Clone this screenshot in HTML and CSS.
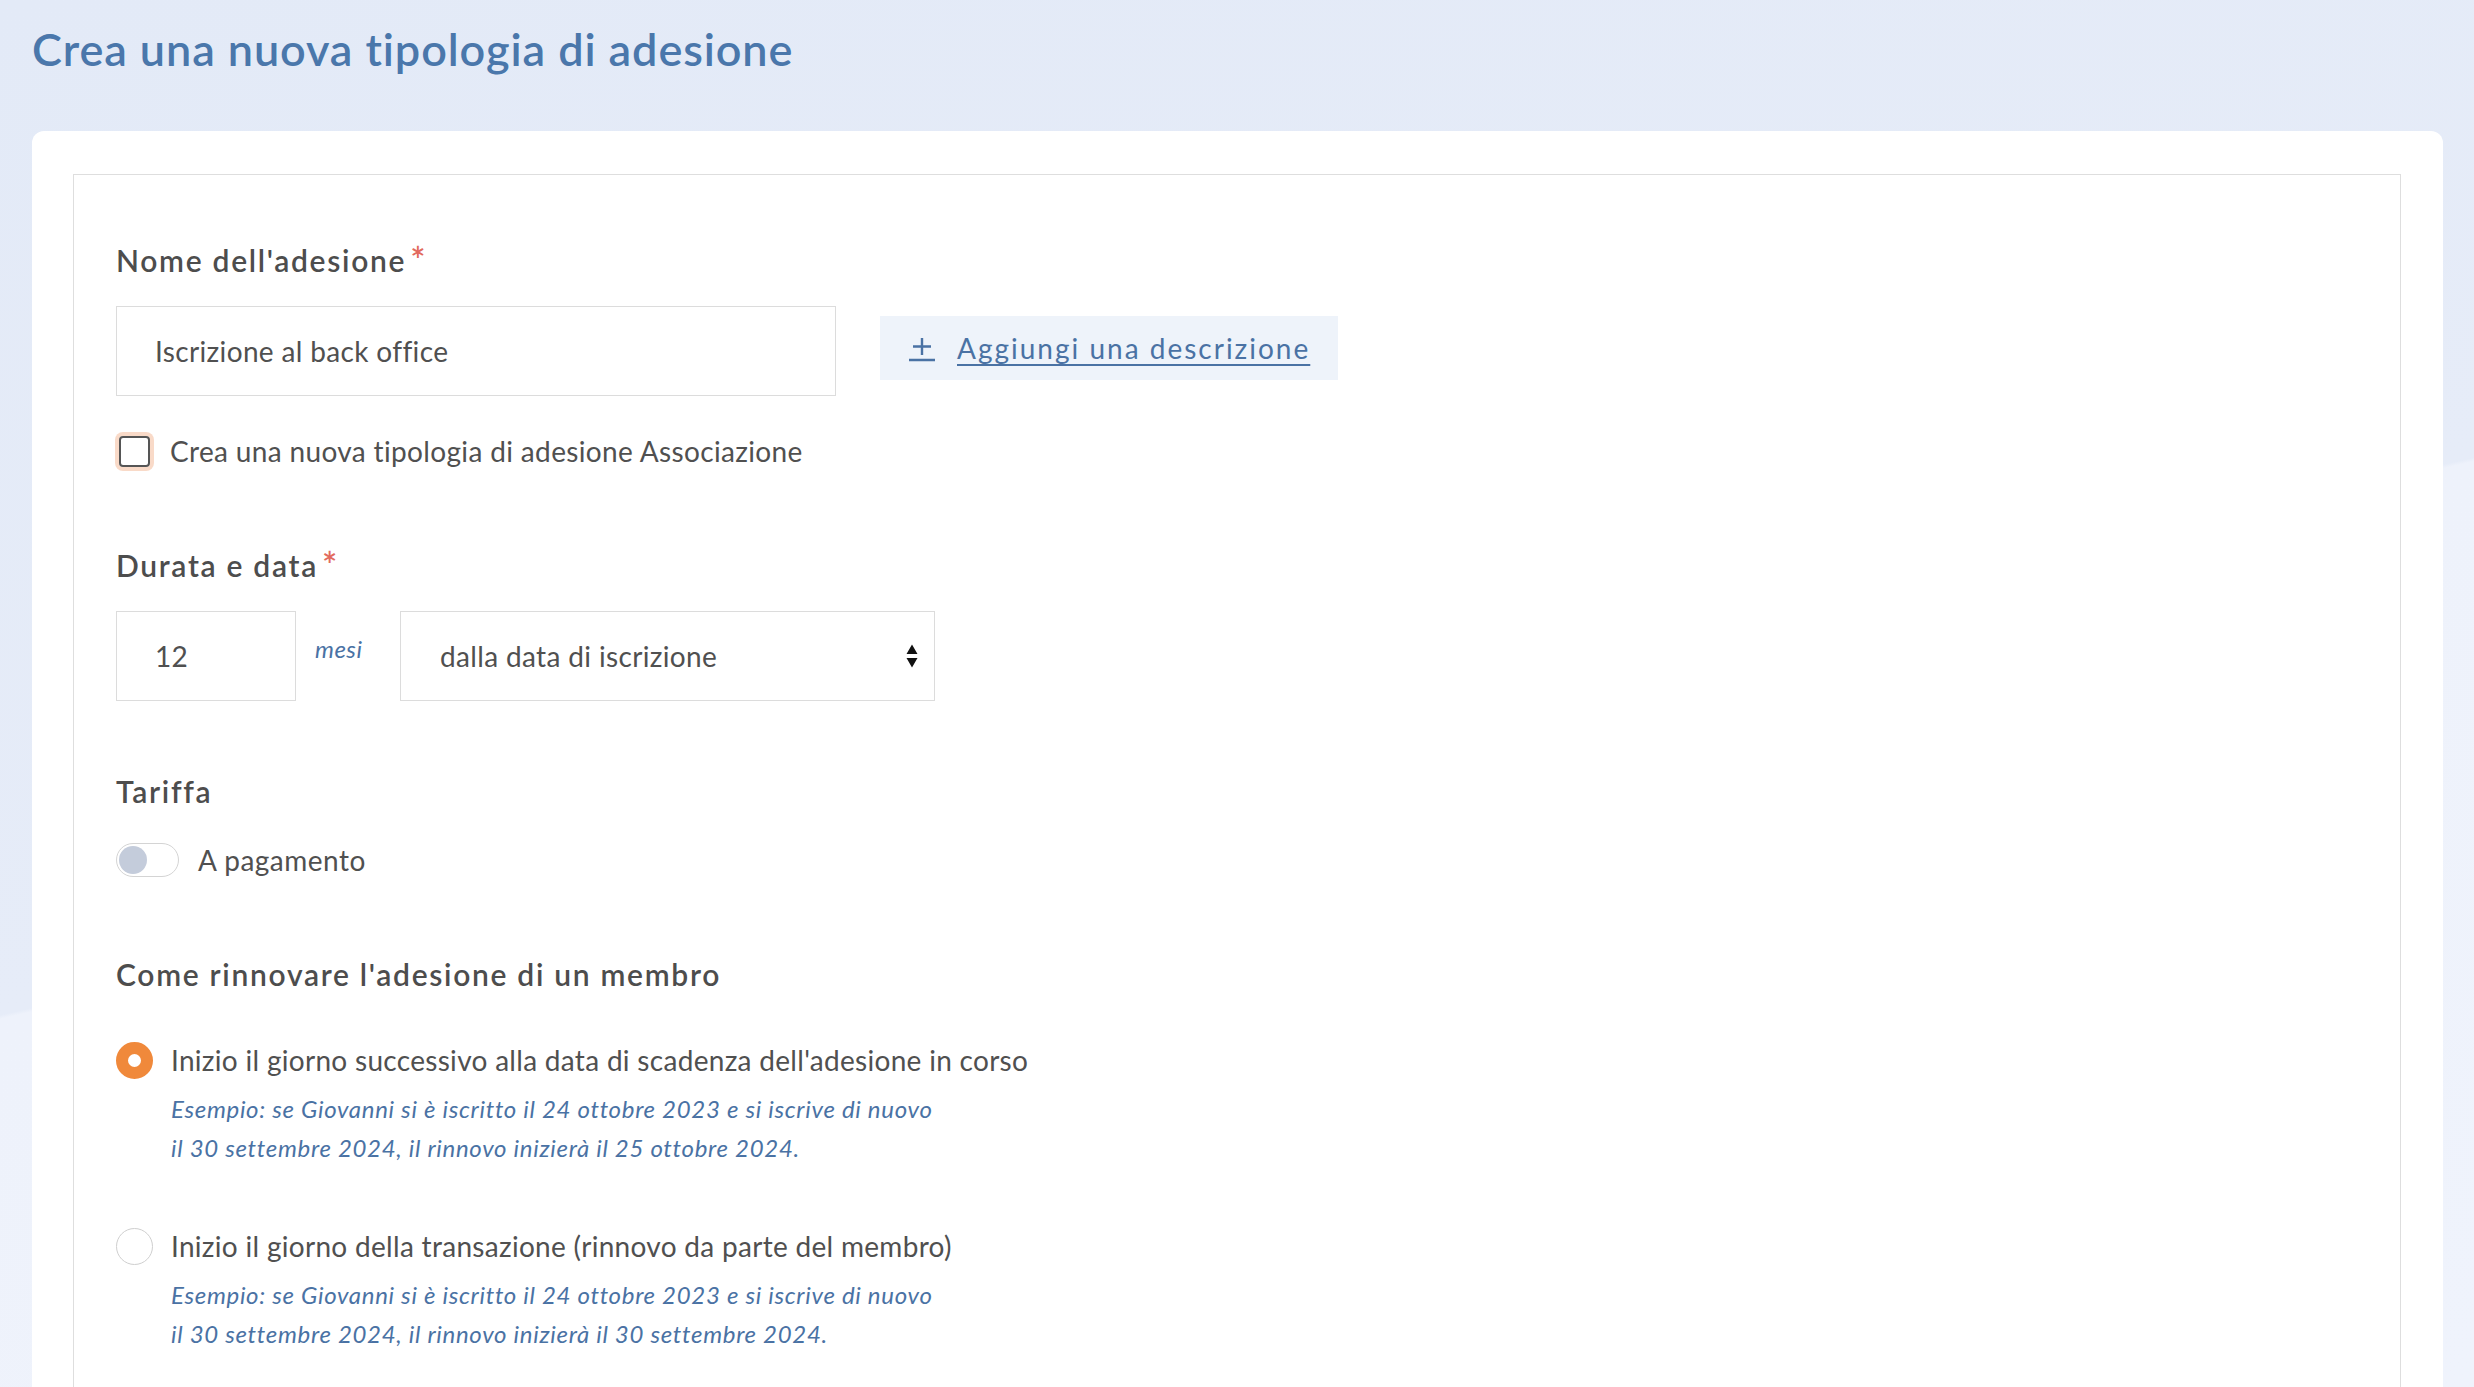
FILE: index.html
```html
<!DOCTYPE html>
<html lang="it">
<head>
<meta charset="utf-8">
<title>Crea una nuova tipologia di adesione</title>
<link rel="stylesheet" href="styles.css">
</head>
<body>
<div class="page">
  <h1 class="title">Crea una nuova tipologia di adesione</h1>
  <div class="card">
    <div class="panel">
      <section class="field field-name">
        <div class="label">Nome dell'adesione<span class="req">*</span></div>
        <div class="row">
          <input class="input input-name" type="text" value="Iscrizione al back office">
          <button class="add-desc" type="button">
            <svg class="add-icon" viewBox="0 0 28 26" width="28" height="26" aria-hidden="true">
              <path d="M14 2v17M5 10.5h18M1 24h26" fill="none" stroke="#4a72a4" stroke-width="2.4"/>
            </svg>
            <span class="add-text">Aggiungi una descrizione</span>
          </button>
        </div>
        <label class="check">
          <span class="check-box"></span>
          <span>Crea una nuova tipologia di adesione Associazione</span>
        </label>
      </section>

      <section class="field field-duration">
        <div class="label">Durata e data<span class="req">*</span></div>
        <div class="row row-duration">
          <input class="input input-months" type="text" value="12">
          <span class="unit">mesi</span>
          <div class="select">
            <span>dalla data di iscrizione</span>
            <svg class="select-arrows" viewBox="0 0 12 26" width="12" height="26" aria-hidden="true">
              <path d="M6 1.5L11.5 11H0.5Z M6 24.5L11.5 15H0.5Z" fill="#111"/>
            </svg>
          </div>
        </div>
      </section>

      <section class="field field-fee">
        <div class="label">Tariffa</div>
        <div class="toggle-row">
          <span class="toggle"><span class="knob"></span></span>
          <span>A pagamento</span>
        </div>
      </section>

      <section class="field field-renew">
        <div class="label">Come rinnovare l'adesione di un membro</div>
        <div class="option">
          <div class="radio-row">
            <span class="radio radio-on"></span>
            <span>Inizio il giorno successivo alla data di scadenza dell'adesione in corso</span>
          </div>
          <p class="example">Esempio: se Giovanni si è iscritto il 24 ottobre 2023 e si iscrive di nuovo<br>il 30 settembre 2024, il rinnovo inizierà il 25 ottobre 2024.</p>
        </div>
        <div class="option option-2">
          <div class="radio-row">
            <span class="radio"></span>
            <span>Inizio il giorno della transazione (rinnovo da parte del membro)</span>
          </div>
          <p class="example">Esempio: se Giovanni si è iscritto il 24 ottobre 2023 e si iscrive di nuovo<br>il 30 settembre 2024, il rinnovo inizierà il 30 settembre 2024.</p>
        </div>
      </section>
    </div>
  </div>
</div>
</body>
</html>
```
FILE: styles.css
```css
html {
  background-color: #eef2fb;
  background-image: linear-gradient(167.3deg, #e3eaf7 0%, #e6ecf8 52.2%, #eef2fb 52.4%, #eff3fc 100%);
  background-repeat: no-repeat;
  background-size: 100% 1387px;
}

body {
  margin: 0;
  font-family: "Lato", "Open Sans", sans-serif;
  color: #505050;
}

.page {
  padding: 0 31px 0 32px;
}

.title {
  margin: 0 0 55px;
  padding-top: 22px;
  font-size: 45px;
  line-height: 54px;
  font-weight: 600;
  letter-spacing: 0.9px;
  color: #4a77ab;
}

.card {
  background: #fff;
  border-radius: 12px 12px 0 0;
  padding: 43px 42px 0 41px;
}

.panel {
  border: 1px solid #dedede;
  border-bottom: none;
  padding: 65px 42px 200px;
}

.label {
  font-size: 30px;
  line-height: 40px;
  font-weight: 600;
  color: #4d4d4d;
  letter-spacing: 1.7px;
}

.req {
  color: #e26a5d;
  margin-left: 4px;
  font-size: 36px;
  line-height: 0;
  vertical-align: -2px;
}

.row {
  display: flex;
  align-items: center;
  gap: 44px;
  margin-top: 26px;
}

.input {
  box-sizing: border-box;
  height: 90px;
  border: 1px solid #dcdcdc;
  border-radius: 0;
  padding: 0 38px;
  font-family: inherit;
  font-size: 28px;
  letter-spacing: 0.35px;
  color: #505050;
  background: #fff;
  outline: none;
}

.input-name {
  width: 720px;
}

.add-desc {
  display: flex;
  align-items: center;
  gap: 21px;
  height: 64px;
  width: 458px;
  padding: 0 0 0 28px;
  margin-top: -6px;
  border: none;
  background: #eef3fa;
  font-family: inherit;
  font-size: 28px;
  color: #4a72a4;
  cursor: pointer;
}

.add-icon {
  flex: none;
  margin-top: 2px;
}

.add-text {
  text-decoration: underline;
  text-underline-offset: 5px;
  text-decoration-thickness: 2px;
  letter-spacing: 2px;
}

.check {
  display: flex;
  align-items: center;
  gap: 20px;
  margin-top: 35px;
  height: 40px;
  font-size: 28px;
  letter-spacing: 0.35px;
  padding-left: 3px;
}

.check-box {
  box-sizing: border-box;
  width: 31px;
  height: 31px;
  border: 2px solid #555;
  border-radius: 4px;
  box-shadow: 0 0 0 4px #f9dac8;
  flex: none;
}

.field-duration {
  margin-top: 74px;
}

.row-duration {
  align-items: flex-start;
  gap: 0;
}

.input-months {
  width: 180px;
}

.unit {
  width: 104px;
  box-sizing: border-box;
  padding: 23px 0 0 19px;
  font-size: 24px;
  letter-spacing: 0.5px;
  font-style: italic;
  color: #4a72a4;
}

.select {
  box-sizing: border-box;
  width: 535px;
  height: 90px;
  border: 1px solid #dcdcdc;
  padding: 0 16px 0 39px;
  display: flex;
  align-items: center;
  justify-content: space-between;
  font-size: 28px;
  letter-spacing: 0.35px;
}

.field-fee {
  margin-top: 70px;
}

.toggle-row {
  display: flex;
  align-items: center;
  gap: 19px;
  margin-top: 29px;
  height: 40px;
  font-size: 28px;
  letter-spacing: 0.5px;
}

.toggle {
  box-sizing: border-box;
  width: 63px;
  height: 34px;
  border: 1px solid #d4d4d4;
  border-radius: 17px;
  padding: 2px;
  display: flex;
  align-items: center;
}

.knob {
  width: 28px;
  height: 28px;
  border-radius: 50%;
  background: #c4ccdb;
}

.field-renew {
  margin-top: 74px;
}

.option {
  margin-top: 46px;
}

.option-2 {
  margin-top: 59px;
}

.radio-row {
  display: flex;
  align-items: center;
  gap: 18px;
  height: 40px;
  font-size: 28px;
  letter-spacing: 0.3px;
}

.radio {
  box-sizing: border-box;
  width: 37px;
  height: 37px;
  border-radius: 50%;
  border: 1.5px solid #cfcfcf;
  flex: none;
}

.radio-on {
  border: 12px solid #f0893b;
}

.example {
  margin: 9px 0 0 55px;
  font-size: 24px;
  line-height: 39px;
  letter-spacing: 0.7px;
  font-style: italic;
  color: #4a72a4;
}
```
